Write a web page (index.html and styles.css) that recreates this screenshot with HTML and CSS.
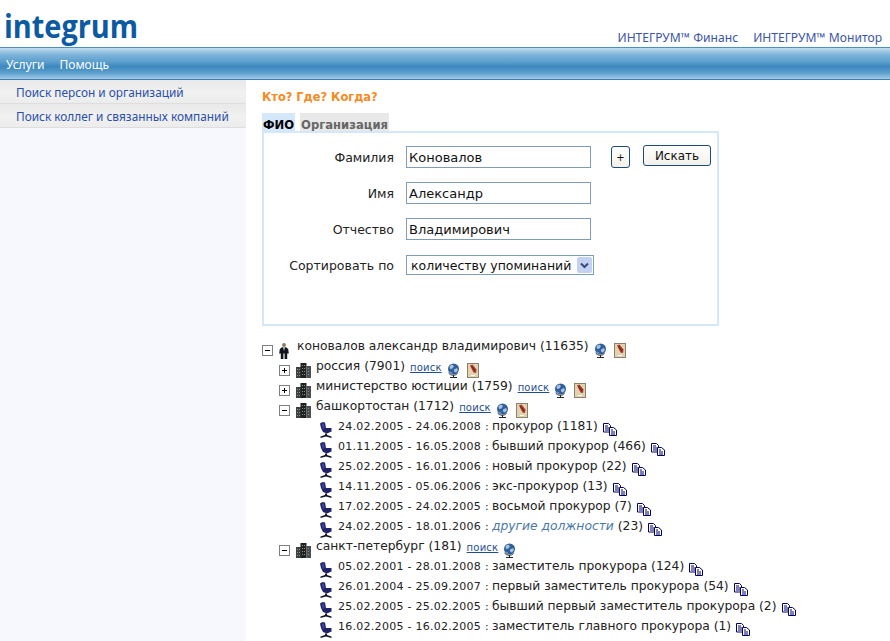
FILE: index.html
```html
<!DOCTYPE html>
<html lang="ru">
<head>
<meta charset="utf-8">
<title>Integrum</title>
<link rel="stylesheet" href="styles.css">
</head>
<body>
<svg class="defs" width="0" height="0" aria-hidden="true">
  <symbol id="i-plus" viewBox="0 0 11 11"><rect x=".5" y=".5" width="10" height="10" fill="#fff" stroke="#808080"/><path d="M3 5.500h5M5.500 3v5" stroke="#000"/></symbol>
  <symbol id="i-minus" viewBox="0 0 11 11"><rect x=".5" y=".5" width="10" height="10" fill="#fff" stroke="#808080"/><path d="M3 5.500h5" stroke="#000"/></symbol>
  <symbol id="i-person" viewBox="0 0 10 16"><circle cx="5" cy="2" r="1.900" fill="#9a7458"/><path d="M.8 6 3 4.200h4L9.200 6l.6 4.500H8.200V16H5.600v-5.500h-1.200V16H1.800v-5.500H.2z" fill="#10141c"/><path d="M4 4.200h2L5 8z" fill="#d8dcdc"/></symbol>
  <symbol id="i-building" viewBox="0 0 15 15"><path d="M0 4h5v11H0z" fill="#3c4040"/><path d="M4.500 0h6v15h-6z" fill="#1e2222"/><path d="M10.500 3H15v12h-4.500z" fill="#4a4e4e"/><path d="M6 2h1v1H6zm2 0h1v1H8zM6 5h1v1H6zm2 0h1v1H8zM6 8h1v1H6zm2 0h1v1H8zm-2 3h1v1H6zm2 0h1v1H8zM1 6h1v1H1zm2 0h1v1H3zM1 9h1v1H1zm2 0h1v1H3zm-2 3h1v1H1zm2 0h1v1H3zm9-7h1v1h-1zm0 3h1v1h-1zm0 3h1v1h-1z" fill="#8c9088"/></symbol>
  <symbol id="i-chair" viewBox="0 0 12 16"><path d="M0 1.500 2.500 0 5 .5 6 6h5.500v3.500L7 11.500 3 10 1 6z" fill="#1f2468"/><path d="M1.800 1.800 3.800 1.300 4.500 6 3 7z" fill="#3f47a0"/><path d="M5 11.500h2v1.500l4.500 1.500V16L6 14.500.5 16v-1.500L5 13z" fill="#101226"/></symbol>
  <symbol id="i-globe" viewBox="0 0 13 15"><path d="M3 14h7v1H3zM6 12h1v2H6z" fill="#222"/><path d="M1.500 10a6 6 0 0 0 9 .5" fill="none" stroke="#333"/><circle cx="6.500" cy="6" r="5.500" fill="#2f5f9c"/><path d="M2.500 3 5 1.500 7 3 5.500 5.500 3 6zM7 6.500 10 5l1 2-2 2.500-2-1z" fill="#a9c3dc"/><path d="M3 8.500l2 1 .5 1.500-2-1z" fill="#86a8cb"/></symbol>
  <symbol id="i-note" viewBox="0 0 12 15"><rect x=".5" y=".5" width="11" height="14" fill="#e2d2b0" stroke="#8a8070"/><path d="M3 2.500 5.500 1.500 9.500 6.500 9 10 6.500 9.500 5 6.500z" fill="#a83a2c"/><path d="M4.500 3.500 8 8" stroke="#6a1f18"/><path d="M4 12.500h4" stroke="#fff"/></symbol>
  <symbol id="i-copy" viewBox="0 0 14 13"><path d="M.5.500h5l2 2V9H.5z" fill="#fff" stroke="#00006a"/><path d="M2 3h3M2 5h4M2 7h4" stroke="#00006a"/><path d="M6.500 4.500h4l3 2.500v5.500h-7z" fill="#fff" stroke="#00006a"/><path d="M8 7h2M8 9h4M8 11h4" stroke="#00006a"/></symbol>
</svg>

<header class="top">
  <div class="logo">integrum</div>
  <nav class="toplinks">
    <a href="#">ИНТЕГРУМ™ Финанс</a>
    <a href="#">ИНТЕГРУМ™ Монитор</a>
  </nav>
</header>
<nav class="menubar">
  <a href="#">Услуги</a>
  <a href="#">Помощь</a>
</nav>
<div class="page">
  <aside class="side">
    <a href="#">Поиск персон и организаций</a>
    <a href="#">Поиск коллег и связанных компаний</a>
  </aside>
  <main class="content">
    <h1 class="slogan">Кто? Где? Когда?</h1>
    <div class="tabs">
      <span class="tab active">ФИО</span>
      <span class="tab">Организация</span>
    </div>
    <form class="searchbox">
      <label>Фамилия</label>
      <input type="text" value="Коновалов">
      <div class="btns">
        <button type="button" class="btn plus">+</button>
        <button type="button" class="btn go">Искать</button>
      </div>
      <label>Имя</label>
      <input type="text" value="Александр">
      <span></span>
      <label>Отчество</label>
      <input type="text" value="Владимирович">
      <span></span>
      <label>Сортировать по</label>
      <div class="select">
        <span>количеству упоминаний</span>
        <i class="arrow"><svg width="9" height="7" viewBox="0 0 9 7"><path d="M1 1.500 4.500 5 8 1.500" fill="none" stroke="#3a4a78" stroke-width="2"/></svg></i>
      </div>
    </form>

    <ul class="tree">
      <li class="row root">
        <svg class="exp"><use href="#i-minus"/></svg>
        <svg class="ic person"><use href="#i-person"/></svg>
        <span class="name">коновалов александр владимирович (11635)</span>
        <svg class="ic globe"><use href="#i-globe"/></svg>
        <svg class="ic note"><use href="#i-note"/></svg>
      </li>
      <li class="row l2">
        <svg class="exp"><use href="#i-plus"/></svg>
        <svg class="ic bld"><use href="#i-building"/></svg>
        <span class="name">россия (7901)</span><a class="find" href="#">поиск</a>
        <svg class="ic globe"><use href="#i-globe"/></svg>
        <svg class="ic note"><use href="#i-note"/></svg>
      </li>
      <li class="row l2">
        <svg class="exp"><use href="#i-plus"/></svg>
        <svg class="ic bld"><use href="#i-building"/></svg>
        <span class="name">министерство юстиции (1759)</span><a class="find" href="#">поиск</a>
        <svg class="ic globe"><use href="#i-globe"/></svg>
        <svg class="ic note"><use href="#i-note"/></svg>
      </li>
      <li class="row l2">
        <svg class="exp"><use href="#i-minus"/></svg>
        <svg class="ic bld"><use href="#i-building"/></svg>
        <span class="name">башкортостан (1712)</span><a class="find" href="#">поиск</a>
        <svg class="ic globe"><use href="#i-globe"/></svg>
        <svg class="ic note"><use href="#i-note"/></svg>
      </li>
      <li class="row l3"><svg class="ic chair"><use href="#i-chair"/></svg><span class="date">24.02.2005 - 24.06.2008 :</span><span class="name">прокурор (1181)</span><svg class="ic copy"><use href="#i-copy"/></svg></li>
      <li class="row l3"><svg class="ic chair"><use href="#i-chair"/></svg><span class="date">01.11.2005 - 16.05.2008 :</span><span class="name">бывший прокурор (466)</span><svg class="ic copy"><use href="#i-copy"/></svg></li>
      <li class="row l3"><svg class="ic chair"><use href="#i-chair"/></svg><span class="date">25.02.2005 - 16.01.2006 :</span><span class="name">новый прокурор (22)</span><svg class="ic copy"><use href="#i-copy"/></svg></li>
      <li class="row l3"><svg class="ic chair"><use href="#i-chair"/></svg><span class="date">14.11.2005 - 05.06.2006 :</span><span class="name">экс-прокурор (13)</span><svg class="ic copy"><use href="#i-copy"/></svg></li>
      <li class="row l3"><svg class="ic chair"><use href="#i-chair"/></svg><span class="date">17.02.2005 - 24.02.2005 :</span><span class="name">восьмой прокурор (7)</span><svg class="ic copy"><use href="#i-copy"/></svg></li>
      <li class="row l3"><svg class="ic chair"><use href="#i-chair"/></svg><span class="date">24.02.2005 - 18.01.2006 :</span><span class="name"><em>другие должности</em> (23)</span><svg class="ic copy"><use href="#i-copy"/></svg></li>
      <li class="row l2">
        <svg class="exp"><use href="#i-minus"/></svg>
        <svg class="ic bld"><use href="#i-building"/></svg>
        <span class="name">санкт-петербург (181)</span><a class="find" href="#">поиск</a>
        <svg class="ic globe"><use href="#i-globe"/></svg>
      </li>
      <li class="row l3"><svg class="ic chair"><use href="#i-chair"/></svg><span class="date">05.02.2001 - 28.01.2008 :</span><span class="name">заместитель прокурора (124)</span><svg class="ic copy"><use href="#i-copy"/></svg></li>
      <li class="row l3"><svg class="ic chair"><use href="#i-chair"/></svg><span class="date">26.01.2004 - 25.09.2007 :</span><span class="name">первый заместитель прокурора (54)</span><svg class="ic copy"><use href="#i-copy"/></svg></li>
      <li class="row l3"><svg class="ic chair"><use href="#i-chair"/></svg><span class="date">25.02.2005 - 25.02.2005 :</span><span class="name">бывший первый заместитель прокурора (2)</span><svg class="ic copy"><use href="#i-copy"/></svg></li>
      <li class="row l3"><svg class="ic chair"><use href="#i-chair"/></svg><span class="date">16.02.2005 - 16.02.2005 :</span><span class="name">заместитель главного прокурора (1)</span><svg class="ic copy"><use href="#i-copy"/></svg></li>
    </ul>
  </main>
</div>
</body>
</html>
```
FILE: styles.css
```css
* { box-sizing: border-box; }
html, body { margin: 0; padding: 0; height: 641px; overflow: hidden; background: #fff; }
body { font-family: "DejaVu Sans", Verdana, sans-serif; font-size: 12px; color: #222; display: flex; flex-direction: column; }
a { text-decoration: none; }
.defs { position: absolute; }

.top { height: 47px; display: flex; justify-content: space-between; align-items: flex-end; padding: 0 8px 1px 4px; flex: none; }
.logo { font-family: "Open Sans", sans-serif; font-weight: 700; font-size: 33px; line-height: 36px; color: #0b5aa2; align-self: flex-start; margin-top: 8px; transform: scaleX(.875); transform-origin: left center; }
.toplinks { display: flex; gap: 15px; }
.toplinks a { font-family: "Noto Sans", sans-serif; color: #3a55a8; font-size: 12.100px; line-height: 16px; }

.menubar { height: 33px; flex: none; border-top: 1px solid #4d8fc2; border-bottom: 1px solid #3f7fb2; display: flex; gap: 15px; align-items: center; padding: 1px 6px 0; background: linear-gradient(#c4dcef 0, #7db3d9 22%, #5b9ecd 45%, #3c88bf 60%, #5b9fcd 80%, #a3cae6 100%); }
.menubar a { font-family: "Noto Sans", sans-serif; color: #fff; font-size: 12px; }

.page { flex: 1; display: flex; min-height: 0; }
.side { width: 246px; flex: none; background: #f6f8fd; display: flex; flex-direction: column; }
.side a { height: 24px; padding: 1px 0 0 16px; display: flex; align-items: center; white-space: nowrap; font-family: "Noto Sans", sans-serif; color: #2a4fa8; font-size: 11.850px; background: linear-gradient(#e9e9e9, #f1f1f1 60%, #ececec); border-bottom: 1px solid #dedede; }

.content { flex: 1; padding: 9px 0 0 16px; min-width: 0; }
.slogan { margin: 0; font-size: 11.400px; line-height: 16px; font-weight: 700; color: #f58a1f; }
.tabs { display: flex; gap: 5px; margin-top: 8px; height: 18px; }
.tab { background: #e8e8e8; color: #666; font-weight: 700; font-size: 11.600px; line-height: 24px; height: 18px; overflow: hidden; padding: 0 1px; }
.tab.active { background: #d5e8fa; color: #000; }

.searchbox { width: 457px; height: 195px; border: 2px solid #d5e8fa; padding-top: 13px; display: grid; grid-template-columns: 130px 185px 1fr; column-gap: 12px; row-gap: 14px; grid-auto-rows: 22px; align-items: center; }
.searchbox label { text-align: right; color: #222; font-size: 12.500px; padding-top: 1px; }
.searchbox input { width: 185px; height: 22px; border: 1px solid #7f9db9; padding: 0 2px; font: 13px "DejaVu Sans", sans-serif; color: #111; }
.btns { display: flex; align-items: flex-start; gap: 13px; padding-left: 8px; height: 22px; }
.btn { font: 12px "DejaVu Sans", sans-serif; color: #111; background: linear-gradient(#fff, #f3f1e8); border: 1px solid #1c4a7a; border-radius: 3px; padding: 0; }
.plus { width: 19px; height: 22px; font-size: 10px; }
.go { width: 68px; height: 21px; margin-top: -1px; }
.select { width: 188px; height: 20px; border: 1px solid #7f9db9; display: flex; justify-content: space-between; align-items: center; padding: 0 1px 0 4px; font-size: 12.500px; color: #111; background: #fff; white-space: nowrap; }
.arrow { width: 15px; height: 16px; background: #c4d2f2; border-radius: 2px; display: flex; align-items: center; justify-content: center; }

.tree { list-style: none; margin: 0; padding: 15px 0 0; }
.row { height: 20px; display: flex; align-items: flex-start; font-size: 12.300px; color: #222; white-space: nowrap; }
.l2 { padding-left: 17px; }
.l3 { padding-left: 58px; }
.exp { width: 11px; height: 11px; margin-top: 4px; flex: none; }
.ic { flex: none; }
.person { width: 10px; height: 16px; margin: 2px 8px 0 6px; }
.bld { width: 15px; height: 15px; margin: 2px 5px 0 6px; }
.chair { width: 12px; height: 16px; margin: 1px 6px 0 0; }
.globe { width: 13px; height: 15px; margin: 2px 0 0 5px; }
.note { width: 12px; height: 15px; margin: 2px 0 0 7px; }
.copy { width: 14px; height: 13px; margin: 2px 0 0 5px; }
.name { line-height: 14px; margin-top: -2px; }
.date { font-size: 11px; line-height: 14px; margin: -1px 3px 0 0; letter-spacing: .27px; }
.name em { color: #4a78a8; font-style: italic; }
.find { color: #1f4f8f; text-decoration: underline; font-size: 10px; line-height: 14px; margin-left: 5px; letter-spacing: .2px; }
```
